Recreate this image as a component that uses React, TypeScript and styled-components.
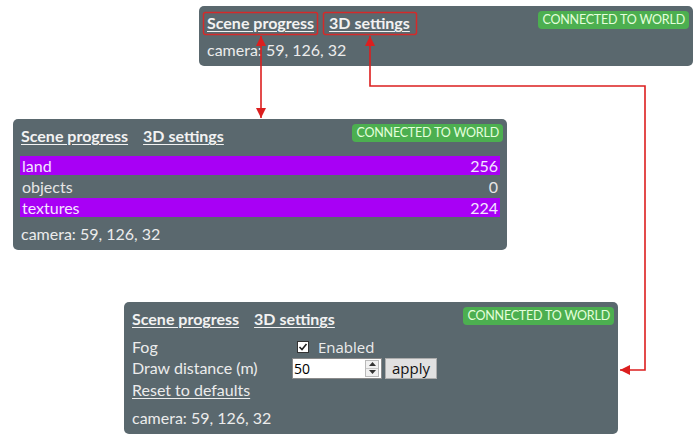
import React from 'react';
import styled, { createGlobalStyle } from 'styled-components';

// --- Global ---
const GlobalStyle = createGlobalStyle`
  html, body {
    margin: 0;
    padding: 0;
    background: #ffffff;
  }
  body {
    font-family: Lato, "Noto Sans", sans-serif;
  }
`;

// --- Layout ---
const Page = styled.div`
  position: relative;
  width: 700px;
  height: 445px;
  padding-top: 6px;
  box-sizing: border-box;
  overflow: hidden;
  display: flex;
  flex-direction: column;
  align-items: flex-start;
`;

const Panel = styled.section<{ $left: number; $top: number }>`
  margin-left: ${({ $left }) => $left}px;
  margin-top: ${({ $top }) => $top}px;
  width: 494px;
  box-sizing: border-box;
  padding: 5px 4px 6px 8px;
  background: #5a686e;
  border-radius: 5px;
  color: #ececec;
  font-size: 16px;
  line-height: 20px;
`;

const Header = styled.div`
  display: flex;
  justify-content: space-between;
  align-items: flex-start;
`;

const Tabs = styled.nav`
  display: flex;
  gap: 15px;
  padding-top: 2px;
`;

const Tab = styled.a`
  color: #f2f2f2;
  font-weight: 700;
  text-decoration: underline;
  text-underline-offset: 2px;
  cursor: pointer;
`;

const Badge = styled.span`
  height: 18px;
  padding: 0 4px;
  border-radius: 4px;
  background: #4caf50;
  color: #e4ffdc;
  font-size: 12.5px;
  line-height: 18px;
  letter-spacing: -0.2px;
  white-space: nowrap;
`;

const Camera = styled.div`
  margin-top: 7px;
`;

// --- Scene progress ---
const ProgressList = styled.div`
  margin: 10px 3px 0 -1px;
  display: flex;
  flex-direction: column;
  gap: 2px;
`;

const ProgressRow = styled.div<{ $active: boolean }>`
  display: flex;
  justify-content: space-between;
  height: 19px;
  line-height: 19px;
  padding: 0 2px;
  background: ${({ $active }) => ($active ? '#a800f5' : 'transparent')};
  color: ${({ $active }) => ($active ? '#f4e6ff' : '#e6e6e6')};
`;

// --- 3D settings ---
const SettingsGrid = styled.div`
  margin-top: 7px;
  display: grid;
  grid-template-columns: 160px auto;
  grid-template-rows: 21px 22px 22px;
  align-items: center;
`;

const Label = styled.span``;

const ResetLink = styled.a`
  grid-column: 1 / span 2;
  color: #ececec;
  text-decoration: underline;
  text-underline-offset: 2px;
  cursor: pointer;
`;

const CheckLabel = styled.label`
  display: flex;
  align-items: center;
  gap: 9px;
  padding-left: 5px;
  font-family: "Open Sans", "Noto Sans", sans-serif;
  font-size: 15px;
  color: #ececec;
`;

const CheckBox = styled.span`
  width: 12px;
  height: 12px;
  box-sizing: border-box;
  background: #ffffff;
  border: 1px solid #333;
  display: flex;
  align-items: center;
  justify-content: center;
`;

const Controls = styled.div`
  display: flex;
  align-items: center;
  gap: 3px;
`;

const NumberField = styled.div`
  display: flex;
  align-items: center;
  width: 90px;
  height: 21px;
  box-sizing: border-box;
  background: #ffffff;
  border: 1px solid #8a8a8a;
`;

const NumberInput = styled.input`
  flex: 1;
  min-width: 0;
  border: 0;
  outline: 0;
  padding: 0 0 0 1px;
  background: transparent;
  font-family: "Open Sans", "Noto Sans", sans-serif;
  font-size: 14px;
  color: #000;
`;

const Spinner = styled.div`
  width: 14px;
  height: 17px;
  margin-right: 2px;
  display: flex;
  flex-direction: column;
  border: 1px solid #b9b9b9;
  box-sizing: border-box;
  background: #f0f0f0;
`;

const SpinHalf = styled.span<{ $down?: boolean }>`
  flex: 1;
  display: flex;
  align-items: center;
  justify-content: center;
  border-top: ${({ $down }) => ($down ? '1px solid #c8c8c8' : '0')};
`;

const ApplyButton = styled.button`
  width: 52px;
  height: 21px;
  padding: 0;
  background: #e1e1e1;
  border: 1px solid #adadad;
  font-family: "Open Sans", "Noto Sans", sans-serif;
  font-size: 15px;
  line-height: 17px;
  color: #111;
`;

// --- Annotations ---
const Overlay = styled.svg`
  position: absolute;
  left: 0;
  top: 0;
  pointer-events: none;
`;

const rows = [
  { name: 'land', value: 256, active: true },
  { name: 'objects', value: 0, active: false },
  { name: 'textures', value: 224, active: true },
];

const PanelHeader = () => (
  <Header>
    <Tabs>
      <Tab>Scene progress</Tab>
      <Tab>3D settings</Tab>
    </Tabs>
    <Badge>CONNECTED TO WORLD</Badge>
  </Header>
);

const Tri = ({ down }: { down?: boolean }) => (
  <svg width="7" height="4" viewBox="0 0 7 4">
    <path d={down ? 'M0 0 L7 0 L3.5 4 Z' : 'M0 4 L7 4 L3.5 0 Z'} fill="#333" />
  </svg>
);

const App = () => (
  <>
    <GlobalStyle />
    <Page>
      <Panel $left={199} $top={0}>
        <PanelHeader />
        <Camera>camera: 59, 126, 32</Camera>
      </Panel>

      <Panel $left={13} $top={53}>
        <PanelHeader />
        <ProgressList>
          {rows.map((r) => (
            <ProgressRow key={r.name} $active={r.active}>
              <span>{r.name}</span>
              <span>{r.value}</span>
            </ProgressRow>
          ))}
        </ProgressList>
        <Camera>camera: 59, 126, 32</Camera>
      </Panel>

      <Panel $left={124} $top={52}>
        <PanelHeader />
        <SettingsGrid>
          <Label>Fog</Label>
          <CheckLabel>
            <CheckBox>
              <svg width="10" height="10" viewBox="0 0 10 10">
                <polyline points="1.5,5 4,7.5 8.5,2" fill="none" stroke="#222" strokeWidth="1.6" />
              </svg>
            </CheckBox>
            Enabled
          </CheckLabel>
          <Label>Draw distance (m)</Label>
          <Controls>
            <NumberField>
              <NumberInput type="text" defaultValue="50" />
              <Spinner>
                <SpinHalf><Tri /></SpinHalf>
                <SpinHalf $down><Tri down /></SpinHalf>
              </Spinner>
            </NumberField>
            <ApplyButton>apply</ApplyButton>
          </Controls>
          <ResetLink>Reset to defaults</ResetLink>
        </SettingsGrid>
        <Camera>camera: 59, 126, 32</Camera>
      </Panel>

      <Overlay width="700" height="445" viewBox="0 0 700 445">
        <defs>
          <marker
            id="head"
            markerUnits="userSpaceOnUse"
            markerWidth="10"
            markerHeight="10"
            refX="10"
            refY="5"
            orient="auto-start-reverse"
          >
            <path d="M0 0 L10 5 L0 10 Z" fill="#dc1f1f" />
          </marker>
        </defs>
        <rect x="203.5" y="12.5" width="114" height="22" rx="2" fill="none" stroke="#d42a2a" strokeWidth="1.5" />
        <rect x="323.5" y="12.5" width="93" height="22" rx="2" fill="none" stroke="#d42a2a" strokeWidth="1.5" />
        <line x1="261" y1="36" x2="261" y2="118" stroke="#dc1f1f" strokeWidth="1.6" markerStart="url(#head)" markerEnd="url(#head)" />
        <polyline
          points="370,36 370,86 645,86 645,370 620,370"
          fill="none"
          stroke="#dc1f1f"
          strokeWidth="1.6"
          markerStart="url(#head)"
          markerEnd="url(#head)"
        />
      </Overlay>
    </Page>
  </>
);

export default App;
